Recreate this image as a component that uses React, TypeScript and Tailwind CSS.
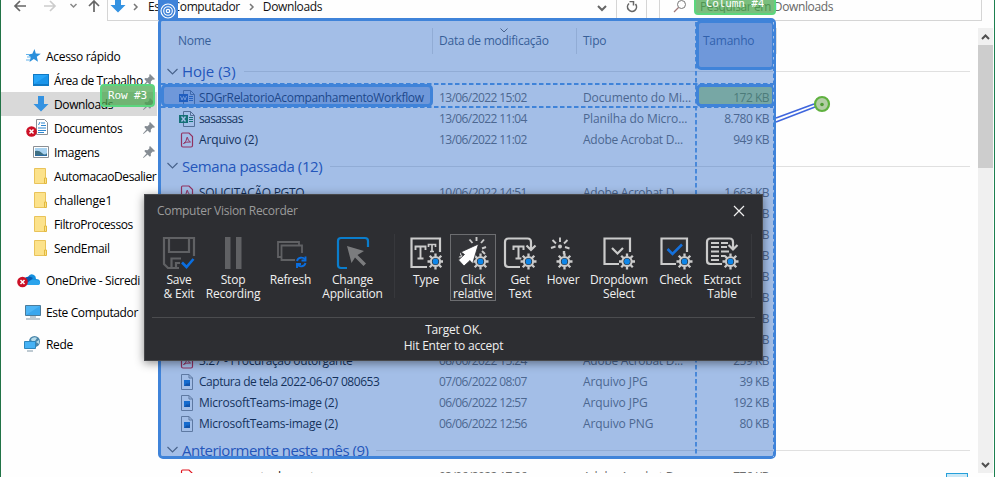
import React from 'react';

type P = { children?: React.ReactNode };

function Gear({ x, y }: { x: number; y: number }) {
  return (
    <g transform={`translate(${x} ${y})`}>
      <circle r="7.500" fill="#2d2e32" />
      <path d="M0-8V-5M0 5V8M-8 0H-5M5 0H8M-5.800-5.800L-3.500-3.500M3.500 3.500L5.800 5.800M5.800-5.800L3.500-3.500M-3.500 3.500L-5.800 5.800" stroke="#cbcbcb" strokeWidth="2.300" />
      <circle r="4.600" fill="#2d2e32" stroke="#cbcbcb" strokeWidth="2" />
      <circle r="2.900" fill="#0f86e8" />
    </g>
  );
}

function Ic({ children }: P) {
  return (
    <svg width="34" height="34" viewBox="0 0 34 34" fill="none" className="block shrink-0">
      {children}
    </svg>
  );
}

const SaveIcon = () => (
  <Ic>
    <g stroke="#606164" strokeWidth="2.200">
      <path d="M32 20V2H2v26l4 4h11" />
      <path d="M7 2v14h20V2" />
      <path d="M9.500 32v-9.500H19M14 32v-5h4" />
    </g>
    <path d="M20 26.500l4.500 4.500L31.500 23" stroke="#0a6ee0" strokeWidth="2.600" />
  </Ic>
);
const PauseIcon = () => (
  <Ic>
    <path d="M9 1h5.500v32H9zM20 1h5.500v32H20z" fill="#606164" />
  </Ic>
);
const RefreshIcon = () => (
  <Ic>
    <g stroke="#606164" strokeWidth="1.800">
      <path d="M7 21H4V6h21v3" />
      <path d="M21 24H7.500V9.500H28V17" />
    </g>
    <g stroke="#0a6ee0" strokeWidth="1.900">
      <path d="M23 25a4.500 4.500 0 0 1 8-1.500M31.500 27a4.500 4.500 0 0 1-8 1.500" />
      <path d="M31.500 20.500v4h-4M23 32v-4h4" />
    </g>
  </Ic>
);
const ChangeIcon = () => (
  <Ic>
    <path d="M11 32H5q-3 0-3-3V5q0-3 3-3h24q3 0 3 3v6" stroke="#0a7dcc" strokeWidth="2.200" />
    <path d="M11 10l17 5-6.500 4L30 27.500l-2.500 2.500-8.500-8.500L15.500 27z" fill="#7b7c7e" />
  </Ic>
);
const TypeIcon = () => (
  <Ic>
    <g stroke="#cbcbcb">
      <path d="M18 31H2.500V2.500H31V16" strokeWidth="2.200" />
      <path d="M6.500 14v-3.500h10V14M11.500 11v11M8.500 22.500h6" strokeWidth="1.900" />
      <path d="M19.500 11V8.500h7V11M23 8.500V15M21 15.500h4" strokeWidth="1.700" />
    </g>
    <Gear x={26.500} y={25.500} />
  </Ic>
);
const ClickIcon = () => (
  <Ic>
    <path d="M20.500 1v4M13.500 3.500l3 3.500M28 3.500L25 7M30 11l-4 1.500M26 15l3 3" stroke="#cbcbcb" strokeWidth="1.900" />
    <Gear x={24.500} y={25.500} />
    <path d="M22.500 8L5 16l3.500 2.500L2.500 24l5.500 6 6-5.500 2.500 3.500z" fill="#fff" stroke="#2d2e32" strokeWidth=".8" />
    <path d="M5.500 18L2.500 21.500 5 21.500l1.500-1.500zM4 16.500l2 2-2 2z" fill="#cbcbcb" />
  </Ic>
);
const GetTextIcon = () => (
  <Ic>
    <g stroke="#cbcbcb">
      <path d="M17 31H5.500Q2 31 2 27.500V6Q2 2.500 5.500 2.500h19Q28 2.500 28 6v8M23.500 9.500l4.500 4.500 4.500-4.500" strokeWidth="2.200" />
      <path d="M10.500 14v-3.500h10V14M15.500 11v11M12.500 22.500h6" strokeWidth="2" />
    </g>
    <Gear x={25.500} y={25.500} />
  </Ic>
);
const HoverIcon = () => (
  <Ic>
    <path d="M14 1.500V6M6.500 4l3.500 3.500M21.500 4L18 7.500M5 12l4.500-1.500M19 11l4.500 1.500" stroke="#cbcbcb" strokeWidth="1.900" />
    <circle cx="14" cy="10.500" r="2" fill="#cbcbcb" />
    <path d="M18 19v-4" stroke="#cbcbcb" strokeWidth="2.400" />
    <Gear x={18.500} y={25.500} />
  </Ic>
);
const DropIcon = () => (
  <Ic>
    <g stroke="#cbcbcb" strokeWidth="2.200">
      <path d="M17 28H2.500V2.500H28V16" />
      <path d="M10 12l5.500 5.500L21 12" />
    </g>
    <Gear x={25} y={25.500} />
  </Ic>
);
const CheckIcon = () => (
  <Ic>
    <path d="M17 28H2.500V2.500H28V16" stroke="#cbcbcb" strokeWidth="2.200" />
    <path d="M8.500 13l5 5L23 8.500" stroke="#1470dc" strokeWidth="2.500" />
    <Gear x={25.500} y={25.500} />
  </Ic>
);
const TableIcon = () => (
  <Ic>
    <g stroke="#cbcbcb">
      <path d="M17 28H5.500Q2 28 2 24.500V6Q2 2.500 5.500 2.500h19Q28 2.500 28 6v6M23.500 9l4.500 4.500L32.500 9" strokeWidth="2.200" />
      <path d="M6 7h8M6 11h8M6 15.500h8M6 20h8M6 24h8M16 7h7M16 11h6M16 15.500h8M16 20h4" strokeWidth="1.800" />
    </g>
    <Gear x={25.500} y={25.500} />
  </Ic>
);

function Tool({ icon, label, cls }: { icon: React.ReactNode; label: string[]; cls: string }) {
  return (
    <div className={`flex h-[67px] shrink-0 flex-col items-center border pt-px ${cls}`}>
      {icon}
      <div className="mt-[3px] text-center leading-[14px] whitespace-nowrap">
        {label.map((l) => (
          <div key={l}>{l}</div>
        ))}
      </div>
    </div>
  );
}

function Recorder() {
  return (
    <div className="absolute top-[194px] left-[144px] flex h-[167px] w-[619px] flex-col border border-[#47484b] bg-[#2d2e32] text-[12px] tracking-[-0.2px] text-[#f0f0f0] shadow-[0_2px_9px_rgba(0,0,0,0.45)]">
      <div className="flex h-[39px] shrink-0 items-start justify-between pr-[17px] pl-3 pt-[7px]">
        <span className="leading-[18px] tracking-[-0.28px] text-[#9b9b9b]">Computer Vision Recorder</span>
        <svg width="12" height="12" viewBox="0 0 12 12" className="mt-[3px]">
          <path d="M1 1l10 10M11 1L1 11" stroke="#f0f0f0" strokeWidth="1.2" />
        </svg>
      </div>
      <div className="mx-[7px] flex h-[84px] shrink-0 items-start border-b border-[#4b4c4f]">
        <Tool cls="w-11 ml-[5px] border-transparent" icon={<SaveIcon />} label={['Save', '& Exit']} />
        <Tool cls="w-[60px] ml-0.5 border-transparent" icon={<PauseIcon />} label={['Stop', 'Recording']} />
        <Tool cls="w-[49px] ml-[3px] border-transparent" icon={<RefreshIcon />} label={['Refresh']} />
        <Tool cls="w-[69px] ml-[3px] border-transparent" icon={<ChangeIcon />} label={['Change', 'Application']} />
        <div className="ml-[7px] h-16 w-px bg-[#37383c]" />
        <Tool cls="w-11 ml-[9px] border-transparent" icon={<TypeIcon />} label={['Type']} />
        <Tool cls="w-[46px] ml-0.5 border-[#6c6d70] bg-[#333438]" icon={<ClickIcon />} label={['Click', 'relative']} />
        <Tool cls="w-11 ml-0.5 border-transparent" icon={<GetTextIcon />} label={['Get', 'Text']} />
        <Tool cls="w-10 ml-px border-transparent" icon={<HoverIcon />} label={['Hover']} />
        <Tool cls="w-16 ml-1 border-transparent" icon={<DropIcon />} label={['Dropdown', 'Select']} />
        <Tool cls="w-[43px] ml-[3px] border-transparent" icon={<CheckIcon />} label={['Check']} />
        <Tool cls="w-11 ml-[3px] border-transparent" icon={<TableIcon />} label={['Extract', 'Table']} />
        <div className="ml-[7px] h-16 w-px bg-[#37383c]" />
      </div>
      <div className="pt-1 text-center leading-4">
        <div>Target OK.</div>
        <div>Hit Enter to accept</div>
      </div>
    </div>
  );
}

const Pin = () => (
  <svg width="12" height="12" viewBox="0 0 12 12" className="absolute right-[2px]">
    <path d="M7 0l5 5-1 .8-1.200-.3-2 2 .1 2.200-1 1L4.600 8.500.5 12 0 11.500l3.500-4.100L1.300 5.100l1-1 2.200.1 2-2L6.200 1z" fill="#858c93" />
  </svg>
);
const Star = () => (
  <svg width="15" height="14" viewBox="0 0 15 14">
    <path d="M8.500 0l1.300 4.600 5 .2-4 3 1.200 5-4.200-2.700L3.500 13l1.200-4.400L2 5.500l4.300-.7z" fill="#2a8fdb" />
    <path d="M0 5.500h4M1 8h4M0 11h4" stroke="#62b2ea" />
  </svg>
);
const Desk = () => (
  <svg width="16" height="12" viewBox="0 0 16 12">
    <path d="M0 0h16v12H0z" fill="#1079c4" />
    <path d="M1 1h14v9H1z" fill="#27a5f8" />
    <path d="M1 10L15 1v9z" fill="#1b95ea" />
  </svg>
);
const Down = () => (
  <svg width="16" height="16" viewBox="0 0 16 16">
    <path d="M5 0h6v8h4.500L8 15.500.5 8H5z" fill="#3492e1" />
  </svg>
);
const ErrorDot = ({ x, y }: { x: number; y: number }) => (
  <g transform={`translate(${x} ${y})`}>
    <circle r="5.300" fill="#cc1127" />
    <path d="M-2-2L2 2M2-2L-2 2" stroke="#fff" strokeWidth="1.500" />
  </g>
);
const Docs = () => (
  <svg width="23" height="18" viewBox="0 0 23 18">
    <path d="M10.500.5h8l3 3v12h-11z" fill="#fff" stroke="#8b8f94" />
    <path d="M15 4h4M15 6.500h5M12 9h8M12 11.500h8M12 13.500h6M12.500 6l1.500-3" stroke="#2f87cf" />
    <ErrorDot x={5.500} y={12.500} />
  </svg>
);
const Pics = () => (
  <svg width="16" height="12" viewBox="0 0 16 12">
    <path d="M.5.5h15v11H.5z" fill="#fff" stroke="#8b8f94" />
    <path d="M2 2h12v8H2z" fill="#a8d2f0" />
    <path d="M2 5q4-1 7 2t5 0v3H2z" fill="#3f6f83" />
    <path d="M2 9h12v1H2z" fill="#2b6ba4" />
  </svg>
);
const Folder = () => (
  <svg width="14" height="16" viewBox="0 0 14 16" className="mr-px">
    <path d="M.5.5h11v15H.5z" fill="#fce28b" stroke="#e9c35a" />
    <path d="M10.500 10h2v5.500h-2z" fill="#fbe08a" stroke="#e2b93e" />
  </svg>
);
const Cloud = () => (
  <svg width="24" height="16" viewBox="0 0 24 16">
    <path d="M7 9q0-4 4-4 2-4 6-2 2 1 2 4 4 0 4 3t-3 3H9z" fill="#1490df" />
    <path d="M8 6q4-3 8 0l-4 4-5 0z" fill="#0a5bb0" />
    <path d="M10 12q3-5 8-4 5 0 5 3 0 2-3 2H9z" fill="#2ba4ec" />
    <ErrorDot x={5.500} y={10} />
  </svg>
);
const Pc = () => (
  <svg width="16" height="16" viewBox="0 0 16 16">
    <path d="M.5 1.500h15v10H.5z" fill="#4db5f5" stroke="#4c7c9b" />
    <path d="M1 11L15 2v9z" fill="#3aa7ee" />
    <path d="M5 13h6M1 15h14" stroke="#7f96a6" />
  </svg>
);
const Net = () => (
  <svg width="17" height="16" viewBox="0 0 17 16">
    <circle cx="10.500" cy="5.500" r="5.500" fill="#4a86aa" />
    <path d="M7 3q3-3 6-1l-2 3-3 1zM12 6l3-2v4z" fill="#b5dbea" />
    <path d="M.5 5.500h11v7H.5z" fill="#46b2f5" stroke="#2d86bd" />
    <path d="M3 15h6" stroke="#7f96a6" />
  </svg>
);

type SideProps = { icon: React.ReactNode; text: string; child?: boolean; pin?: boolean; cls?: string };
function Side({ icon, text, child, pin, cls = '' }: SideProps) {
  return (
    <div className={`relative flex h-6 shrink-0 items-center overflow-hidden whitespace-nowrap ${cls}`}>
      <div className={`flex shrink-0 justify-end ${child ? 'w-12' : 'w-10'}`}>{icon}</div>
      <span className="ml-[5px] pt-px">{text}</span>
      {pin && <Pin />}
    </div>
  );
}

function Sidebar() {
  return (
    <div className="flex w-[156px] shrink-0 flex-col pt-4 text-black">
      <Side icon={<Star />} text="Acesso rápido" cls="tracking-[-0.3px]" />
      <Side child pin icon={<Desk />} text="Área de Trabalho" cls="tracking-[-0.46px]" />
      <Side child pin icon={<Down />} text="Downloads" cls="bg-[#d9d9d9] tracking-[-0.4px]" />
      <Side child pin icon={<Docs />} text="Documentos" cls="tracking-[-0.3px]" />
      <Side child pin icon={<Pics />} text="Imagens" cls="tracking-[-0.3px]" />
      <Side child icon={<Folder />} text="AutomacaoDesalier" cls="tracking-[-0.42px]" />
      <Side child icon={<Folder />} text="challenge1" cls="tracking-[-0.2px]" />
      <Side child icon={<Folder />} text="FiltroProcessos" cls="tracking-[-0.4px]" />
      <Side child icon={<Folder />} text="SendEmail" cls="tracking-[-0.3px]" />
      <Side icon={<Cloud />} text="OneDrive - Sicredi" cls="mt-2 tracking-[-0.35px]" />
      <Side icon={<Pc />} text="Este Computador" cls="mt-2 tracking-[-0.37px]" />
      <Side icon={<Net />} text="Rede" cls="mt-2 tracking-[-0.3px]" />
    </div>
  );
}

const Word = () => (
  <svg width="16" height="16" viewBox="0 0 16 16">
    <path d="M4.500.5h7l4 4v11h-11z" fill="#fff" stroke="#7a7a7a" />
    <path d="M11.500.5v4h4" fill="none" stroke="#7a7a7a" />
    <path d="M10 6.500h4M10 8.500h4M10 10.500h4" stroke="#2b62b5" />
    <path d="M0 4h9v8H0z" fill="#1957b0" />
    <path d="M1.500 6l1.500 4 1.500-3.500L6 10l1.500-4" stroke="#fff" fill="none" />
  </svg>
);
const Excel = () => (
  <svg width="16" height="16" viewBox="0 0 16 16">
    <path d="M4.500.5h7l4 4v11h-11z" fill="#fff" stroke="#7a7a7a" />
    <path d="M11.500.5v4h4" fill="none" stroke="#7a7a7a" />
    <path d="M10 6.500h4M10 8.500h4M10 10.500h4" stroke="#107c41" />
    <path d="M0 4h9v8H0z" fill="#107c41" />
    <path d="M2.500 5.500l4 5M6.500 5.500l-4 5" stroke="#fff" strokeWidth="1.300" />
  </svg>
);
const Pdf = () => (
  <svg width="14" height="16" viewBox="0 0 14 16" className="ml-px">
    <path d="M2.500 1h6.500l3.500 3.500V13.500q0 1.500-1.500 1.500H3q-1.500 0-1.500-1.500V2.500Q1.500 1 2.500 1z" fill="#fff" fillOpacity=".4" stroke="#e0141e" strokeWidth="1.200" />
    <path d="M3.500 11.500q3-1.500 3.500-6 0-1 .5 0 0 3 3 4.500-4-.5-7 1.500z" fill="none" stroke="#e0141e" />
  </svg>
);
const Img = () => (
  <svg width="14" height="16" viewBox="0 0 14 16" className="ml-0.5">
    <path d="M.5.5h7.500l3.500 3.500V15.500H.5z" fill="#fff" fillOpacity=".4" stroke="#8a8a8a" />
    <path d="M8 .5V4h3.500" fill="none" stroke="#8a8a8a" />
    <path d="M3 6h6v6H3z" fill="#1173d4" />
    <path d="M3 12l3-3 1 1 2-2v4z" fill="#0a4d9c" />
  </svg>
);

type RowProps = { icon: React.ReactNode; name: string; date: string; type: string; size: string; nameCls?: string; typeCls?: string };
function Row({ icon, name, date, type, size, nameCls = 'tracking-[-0.25px]', typeCls = 'tracking-[-0.25px]' }: RowProps) {
  return (
    <div className="flex h-[21px] shrink-0 items-center whitespace-nowrap text-[#6d6d6d]">
      <div className="flex w-[260px] shrink-0 items-center pl-[22px]">
        <div className="w-5 shrink-0">{icon}</div>
        <span className={`text-[#111] ${nameCls}`}>{name}</span>
      </div>
      <div className="ml-[22px] w-36 shrink-0 tracking-[-0.6px]">{date}</div>
      <div className={`w-[116px] shrink-0 ${typeCls}`}>{type}</div>
      <div className="w-[70px] shrink-0 text-right tracking-[-0.5px]">{size}</div>
    </div>
  );
}

function Group({ text, cls, textCls }: { text: string; cls: string; textCls: string }) {
  return (
    <div className={`flex shrink-0 items-center whitespace-nowrap pr-2 pl-[10px] ${cls}`}>
      <svg width="11" height="8" viewBox="0 0 11 8">
        <path d="M.5 1l5 5 5-5" fill="none" stroke="#666" strokeWidth="1.200" />
      </svg>
      <span className={`ml-1 text-[15px] text-[#2a50b4] ${textCls}`}>{text}</span>
      <span className="ml-2 h-px flex-1 bg-[#e0e0e0]" />
    </div>
  );
}

const AC = 'Adobe Acrobat D...';
const PAST: [string, string, string][] = [
  ['SOLICITAÇÃO PGTO', '10/06/2022 14:51', '1.663 KB'],
  ['3.20 - Contrato', '10/06/2022 11:40', '310 KB'],
  ['3.21 - Contrato', '10/06/2022 10:12', '284 KB'],
  ['3.22 - Contrato', '09/06/2022 17:05', '156 KB'],
  ['3.23 - Contrato', '09/06/2022 15:31', '421 KB'],
  ['3.24 - Contrato', '09/06/2022 14:20', '198 KB'],
  ['3.25 - Contrato', '08/06/2022 16:44', '345 KB'],
  ['3.26 - Contrato', '08/06/2022 15:30', '267 KB'],
  ['3.27 - Procuração outorgante', '08/06/2022 15:24', '259 KB'],
];

function Files() {
  return (
    <div className="flex h-[445px] min-w-0 flex-1 flex-col overflow-hidden">
      <div className="relative flex h-[26px] shrink-0 items-center whitespace-nowrap tracking-[-0.25px] text-[#4c607a]">
        <div className="h-full w-[276px] border-r border-[#e0e0e0] pl-[21px] leading-[26px]">Nome</div>
        <div className="h-full w-36 border-r border-[#e0e0e0] pl-[6px] leading-[26px]">Data de modificação</div>
        <div className="h-full w-[120px] pl-[6px] leading-[26px]">Tipo</div>
        <div className="h-full w-20 border-r border-[#e0e0e0] pl-[6px] leading-[26px]">Tamanho</div>
        <svg width="8" height="5" viewBox="0 0 8 5" className="absolute top-0 left-[343px]">
          <path d="M.5.5L4 4 7.500.5" fill="none" stroke="#666" />
        </svg>
      </div>
      <Group text="Hoje (3)" cls="mt-[4px] mb-[2px] h-[27px]" textCls="tracking-[0px]" />
      <Row icon={<Word />} name="SDGrRelatorioAcompanhamentoWorkflow" date="13/06/2022 15:02" type="Documento do Mi..." size="172 KB" nameCls="tracking-[-0.33px]" typeCls="" />
      <Row icon={<Excel />} name="sasassas" date="13/06/2022 11:04" type="Planilha do Micro..." size="8.780 KB" nameCls="tracking-[-0.6px]" typeCls="" />
      <Row icon={<Pdf />} name="Arquivo (2)" date="13/06/2022 11:02" type={AC} size="949 KB" nameCls="tracking-[-0.15px]" />
      <Group text="Semana passada (12)" cls="h-8" textCls="tracking-[-0.4px]" />
      {PAST.map(([n, d, s]) => (
        <Row key={n} icon={<Pdf />} name={n} date={d} type={AC} size={s} nameCls={n.startsWith('SOL') ? 'tracking-[-0.3px]' : 'tracking-[-0.35px]'} />
      ))}
      <Row icon={<Img />} name="Captura de tela 2022-06-07 080653" date="07/06/2022 08:07" type="Arquivo JPG" size="39 KB" nameCls="tracking-[-0.47px]" typeCls="" />
      <Row icon={<Img />} name="MicrosoftTeams-image (2)" date="06/06/2022 12:57" type="Arquivo JPG" size="192 KB" typeCls="" />
      <Row icon={<Img />} name="MicrosoftTeams-image (2)" date="06/06/2022 12:56" type="Arquivo PNG" size="80 KB" typeCls="" />
      <Group text="Anteriormente neste mês (9)" cls="h-8" textCls="tracking-[-0.5px]" />
      <Row icon={<Pdf />} name="comprovante de pagto" date="03/06/2022 17:26" type={AC} size="776 KB" />
    </div>
  );
}

function Toolbar() {
  return (
    <div className="flex h-[28px] shrink-0 items-start whitespace-nowrap tracking-[-0.38px] text-[#111]">
      <svg width="106" height="20" viewBox="0 0 106 20" fill="none" className="shrink-0">
        <path d="M25 6H14M19 1l-5 5 5 5" stroke="#666" strokeWidth="1.700" />
        <path d="M43 6h11M49 1l5 5-5 5" stroke="#ccc" strokeWidth="1.700" />
        <path d="M69.500 4l3 3 3-3" stroke="#888" strokeWidth="1.500" />
        <path d="M93 12V1.500M88 6l5-5 5 5" stroke="#666" strokeWidth="1.700" />
      </svg>
      <div className="flex h-[21px] w-[540px] shrink-0 border-r border-b border-l border-[#d5d5d5]">
        <div className="flex h-[13px] min-w-0 flex-1 items-center pl-[2px]">
          <div className="-mt-1"><Down /></div>
          <svg width="6" height="8" viewBox="0 0 6 8" className="ml-[7px] shrink-0">
            <path d="M1 1l3 3-3 3" fill="none" stroke="#777" strokeWidth="1.500" />
          </svg>
          <span className="ml-[9px]">Este Computador</span>
          <svg width="6" height="8" viewBox="0 0 6 8" className="ml-[9px] shrink-0">
            <path d="M1 1l3 3-3 3" fill="none" stroke="#777" strokeWidth="1.500" />
          </svg>
          <span className="ml-[8px]">Downloads</span>
          <svg width="10" height="7" viewBox="0 0 10 7" className="mt-[3px] mr-[9px] ml-auto">
            <path d="M1 1l4 4 4-4" fill="none" stroke="#666" strokeWidth="2" />
          </svg>
        </div>
        <div className="flex w-[30px] justify-center border-l border-[#d5d5d5] pt-px">
          <svg width="12" height="12" viewBox="0 0 12 12" fill="none">
            <path d="M9.500 3A4.500 4.500 0 1 1 3 2.500" stroke="#666" strokeWidth="1.600" />
            <path d="M3.500.5h4v4" stroke="#666" strokeWidth="1.500" />
          </svg>
        </div>
      </div>
      <div className="ml-3 flex h-[21px] w-[323px] shrink-0 border-r border-b border-l border-[#d5d5d5] text-[#666]">
        <svg width="14" height="14" viewBox="0 0 14 14" fill="none" className="ml-[13px]">
          <circle cx="8.500" cy="4.500" r="4" stroke="#777" />
          <path d="M5.500 7.500L1 12" stroke="#a07878" strokeWidth="1.200" />
        </svg>
        <span className="ml-[13px] leading-[13px]">Pesquisar em Downloads</span>
      </div>
    </div>
  );
}

function Scrollbar() {
  return (
    <div className="mr-px flex h-[445px] w-[15px] shrink-0 flex-col items-center bg-[#f0f0f0]">
      <svg width="15" height="17" viewBox="0 0 15 17" className="shrink-0">
        <path d="M4 11l3.500-3.500L11 11" fill="none" stroke="#505050" strokeWidth="2" />
      </svg>
      <div className="h-[123px] w-full bg-[#cdcdcd]" />
      <svg width="15" height="17" viewBox="0 0 15 17" className="mt-auto shrink-0">
        <path d="M4 7l3.500 3.500L11 7" fill="none" stroke="#505050" strokeWidth="2" />
      </svg>
    </div>
  );
}

function Selection() {
  return (
    <>
      <div className="absolute top-[18px] left-[158px] h-[441px] w-[618px] rounded-[5px] border-[3px] border-[#3f83d9] bg-[rgba(28,95,197,0.4)] bg-clip-padding" />
      <div className="absolute top-0 left-[158px] flex h-5 w-5 items-center justify-center bg-[#3f83d9]">
        <svg width="16" height="16" viewBox="0 0 16 16" fill="none" stroke="#fff" className="mt-px">
          <circle cx="8" cy="8" r="7" strokeWidth="1.100" />
          <circle cx="8" cy="8" r="4.300" strokeWidth="1.100" />
          <circle cx="8" cy="8" r="1.700" strokeWidth="1.200" />
        </svg>
      </div>
      <div className="absolute top-[84px] left-[161px] h-[23px] w-[272px] rounded-[5px] border-[3px] border-[#3f83d9] bg-[rgba(40,100,200,0.42)]" />
      <div className="absolute top-[20px] left-[696px] h-[50px] w-[79px] rounded-[5px] border-[3px] border-[#3f83d9] bg-[rgba(40,100,200,0.42)]" />
      <div className="absolute top-[84px] left-[696px] h-[23px] w-[79px] rounded-[5px] border-[3px] border-[#3f83d9] bg-[rgba(76,144,100,0.5)]" />
      <svg width="995" height="477" className="absolute top-0 left-0" fill="none">
        <g stroke="#3f83d9" strokeWidth="1.800" strokeDasharray="4.500 2.500">
          <path d="M161 84h613M161 107h613M696 22v435" />
        </g>
        <path d="M773.500 22v435" stroke="#a4bfe8" strokeDasharray="2.500 4.500" />
        <path d="M776 118l38-14M776 122l39-15" stroke="#3f66dd" strokeWidth="1.600" />
        <circle cx="822" cy="104" r="7" fill="#b3cda6" stroke="#5fb13f" strokeWidth="2.200" />
        <circle cx="822" cy="104.500" r="1.800" fill="#4f9b35" />
      </svg>
      <div className="absolute top-[84px] left-[100px] flex h-[23px] w-[55px] items-center justify-center rounded border-2 border-[#5bd67e] bg-[rgba(70,165,75,0.72)] pt-0.5 font-['DejaVu_Sans_Mono',monospace] text-[11px] tracking-[-0.1px] text-white">
        <span className="whitespace-pre">Row #3</span>
      </div>
      <div className="absolute -top-[8px] left-[694px] flex h-[23px] w-[82px] items-center justify-center rounded border-2 border-[#5bd67e] bg-[rgba(70,165,75,0.72)] pt-0.5 font-['DejaVu_Sans_Mono',monospace] text-[11px] tracking-[-0.1px] text-white">
        <span className="whitespace-pre">Column #4</span>
      </div>
    </>
  );
}

export default function App() {
  return (
    <div className="relative h-[477px] w-[995px] overflow-hidden border-r border-l border-r-[#1d8050] border-l-[#217346] bg-[#fefefe] font-['Open_Sans','Noto_Sans',sans-serif] text-[12px] tracking-[-0.1px]">
      <div className="flex h-full flex-col">
        <Toolbar />
        <div className="flex min-h-0 flex-1">
          <Sidebar />
          <Files />
          <Scrollbar />
        </div>
      </div>
      <div className="absolute top-[473px] left-[945px] h-2 w-[22px] border border-[#26a0da] bg-[#cbe8f6]" />
      <div className="absolute inset-y-0 -left-px w-[995px]">
        <Selection />
        <Recorder />
      </div>
    </div>
  );
}
